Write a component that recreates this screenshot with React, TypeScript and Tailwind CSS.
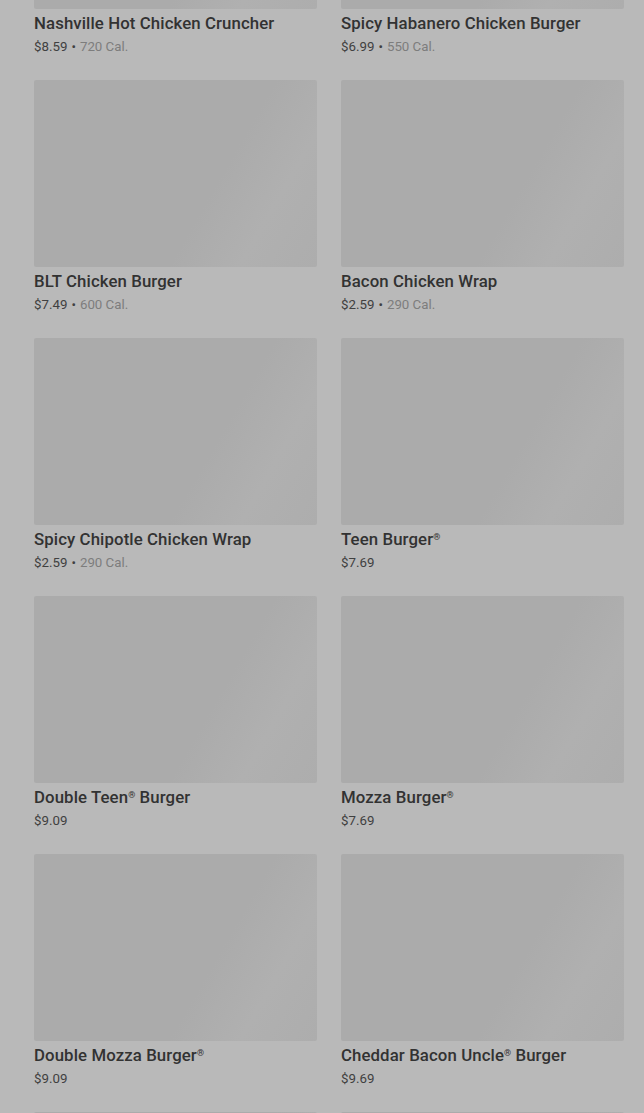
import React from "react";

type Item = { name: string; price: string; cal?: string };

const items: Item[] = [
  { name: "Nashville Hot Chicken Cruncher", price: "$8.59", cal: "720 Cal." },
  { name: "Spicy Habanero Chicken Burger", price: "$6.99", cal: "550 Cal." },
  { name: "BLT Chicken Burger", price: "$7.49", cal: "600 Cal." },
  { name: "Bacon Chicken Wrap", price: "$2.59", cal: "290 Cal." },
  { name: "Spicy Chipotle Chicken Wrap", price: "$2.59", cal: "290 Cal." },
  { name: "Teen Burger®", price: "$7.69" },
  { name: "Double Teen® Burger", price: "$9.09" },
  { name: "Mozza Burger®", price: "$7.69" },
  { name: "Double Mozza Burger®", price: "$9.09" },
  { name: "Cheddar Bacon Uncle® Burger", price: "$9.69" },
];

function renderName(name: string) {
  const parts = name.split("®");
  return parts.map((p, i) => (
    <React.Fragment key={i}>
      {p}
      {i < parts.length - 1 && <sup className="text-[9px] top-[-0.6em]">®</sup>}
    </React.Fragment>
  ));
}

const imgCls =
  "h-[187px] rounded-[2px] bg-[linear-gradient(120deg,#ababab_0%,#ababab_62%,#b0b0b0_80%,#adadad_100%)]";

export default function App() {
  return (
    <div
      className="h-[1113px] w-[644px] overflow-hidden bg-[#b9b9b9]"
      style={{ fontFamily: "Roboto, 'Liberation Sans', sans-serif" }}
    >
      <div className="mt-[-178px] grid grid-cols-2 gap-x-6 gap-y-[24px] pl-[34px] pr-[20px]">
        {items.map((it, idx) => (
          <div key={idx} className="flex flex-col">
            <div className={imgCls} />
            <div className="mt-[4px] text-[16.8px] font-medium leading-[20px] text-[#323232] tracking-[0.1px]">
              {renderName(it.name)}
            </div>
            <div className="mt-[5px] text-[13.3px] leading-[18px]">
              <span className="text-[#404040]">{it.price}</span>
              {it.cal && (
                <>
                  <span className="text-[#404040] mx-[4px]">•</span>
                  <span className="text-[#7d7d7d]">{it.cal}</span>
                </>
              )}
            </div>
          </div>
        ))}
        <div className={imgCls} />
        <div className={imgCls} />
      </div>
    </div>
  );
}
